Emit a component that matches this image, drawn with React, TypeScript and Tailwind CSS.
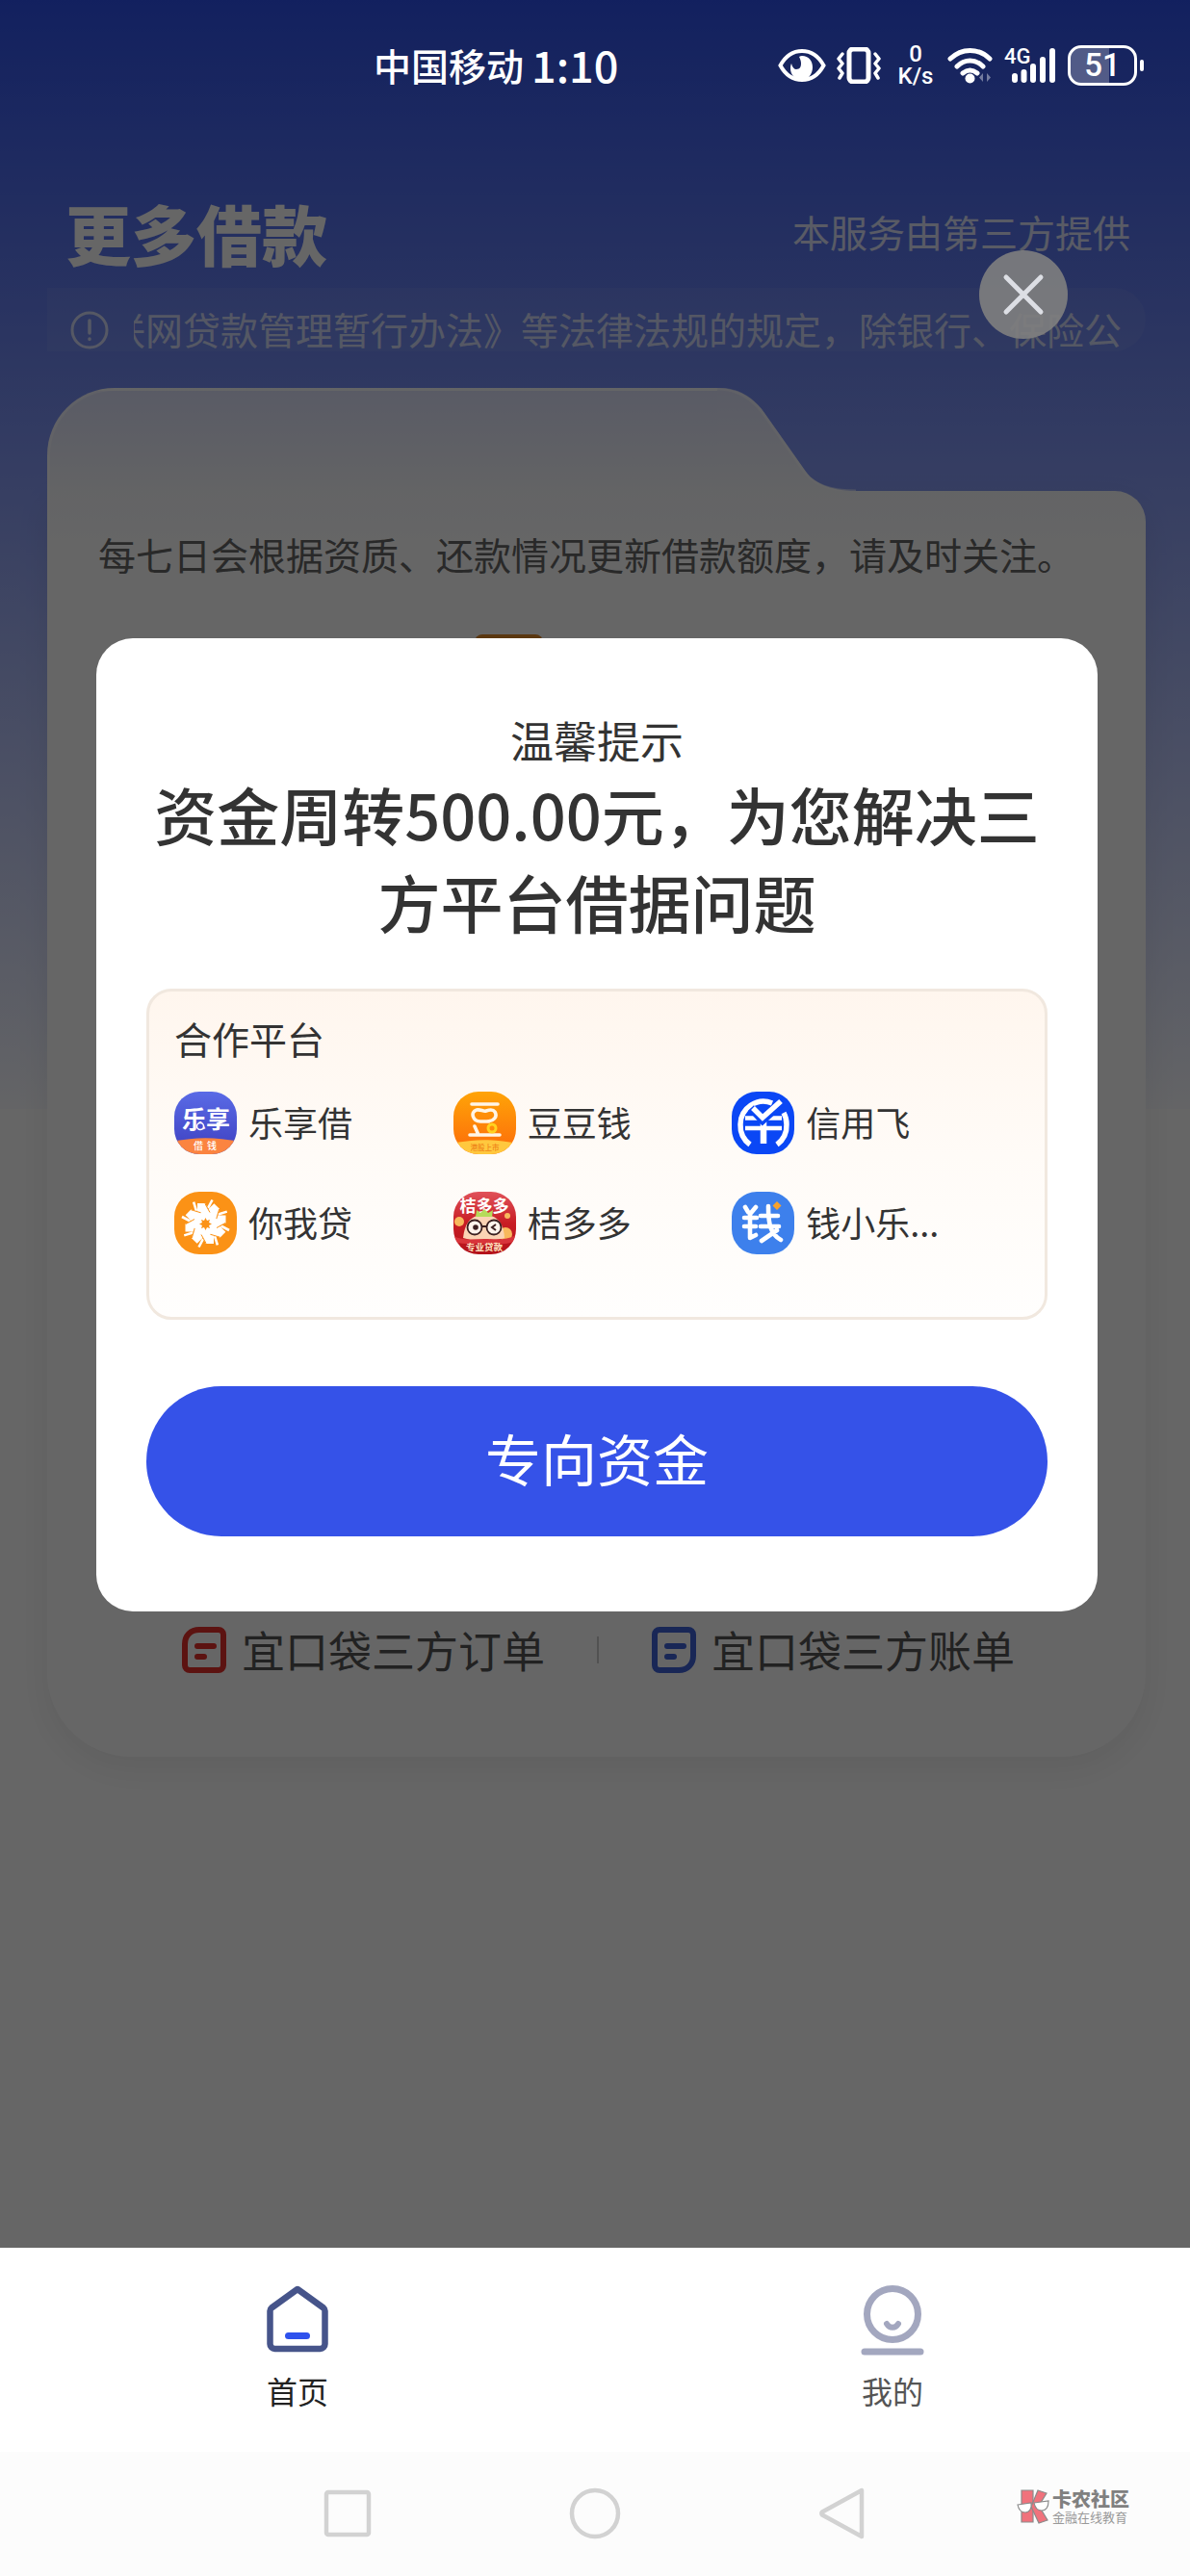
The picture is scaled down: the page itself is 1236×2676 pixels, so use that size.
import React from "react";

const FONT = "font-['Noto_Sans_CJK_SC','Noto_Sans',sans-serif]";

/* ---------- status bar ---------- */

function StatusIcons() {
  return (
    <div className="flex items-center font-['Roboto',sans-serif] text-white">
      <svg className="h-[38px] w-[50px]" viewBox="0 0 50 38" aria-hidden="true">
        <path d="M2.500 19C8 9 16 4 25 4s17 5 22.500 15C42 29 34 34 25 34S8 29 2.500 19Z" fill="none" stroke="currentColor" strokeWidth="4" />
        <path d="M25 9c7 0 11 5 11 12s-5 13-11 13c-7 0-12-5-12-12 0-2 .4-4 1-5 1 4 3 6 5 6 4 0 5-3 5-6 0-3-1-5-2-7 1-.7 2-1 3-1Z" fill="currentColor" />
      </svg>
      <svg className="ml-[11px] h-[38px] w-[46px]" viewBox="0 0 46 38" fill="none" stroke="currentColor" aria-hidden="true">
        <rect x="13" y="2" width="20" height="34" rx="4" strokeWidth="5" />
        <path d="M6 7l-4 5 4 5-4 5 4 5-3 5M40 7l4 5-4 5 4 5-4 5 3 5" strokeWidth="3.500" strokeLinejoin="round" strokeLinecap="round" />
      </svg>
      <div className="ml-4 flex w-[40px] flex-col items-center text-[24px] leading-[23px] font-medium">
        <span>0</span>
        <span>K/s</span>
      </div>
      <svg className="ml-3 h-[38px] w-[50px]" viewBox="0 0 50 38" aria-hidden="true">
        <g fill="none" stroke="currentColor" strokeWidth="5" strokeLinecap="round">
          <path d="M4 12C16 .5 33 .5 45 12" />
          <path d="M11 20c8-8 19-8 27 0" />
          <path d="M17 27c5-4 10-4 15 0" />
        </g>
        <circle cx="24.500" cy="32.500" r="5" fill="currentColor" />
        <path d="M38 27v9l-4-4.500zM42 27v9l4-4.500z" fill="currentColor" opacity=".4" />
      </svg>
      <div className="relative ml-[10px] h-[38px] w-[54px]">
        <span className="absolute top-0 left-0 text-[22px] leading-5 font-medium">4G</span>
        <svg className="h-[38px] w-[54px]" viewBox="0 0 54 38" stroke="currentColor" strokeWidth="6" strokeLinecap="round" aria-hidden="true">
          <path d="M11 30v4M20.500 26v8M30 20v14M40 13v21M50 4v30" />
        </svg>
      </div>
      <div className="ml-3 flex items-center gap-[3px]">
        <div className="relative flex h-[42px] w-[72px] items-center justify-center rounded-[14px] border-[3px] border-white">
          <span className="absolute inset-y-0 left-0 w-[60%] rounded-l-[11px] bg-white/25" />
          <span className="relative text-[33px] leading-9 font-medium">51</span>
        </div>
        <div className="h-3 w-1 rounded-full bg-white" />
      </div>
    </div>
  );
}

/* ---------- partner logos ---------- */

const LOGO = "h-[65px] w-[65px] shrink-0 overflow-hidden rounded-[26px]";

function LogoLexiang() {
  return (
    <svg className={LOGO} viewBox="0 0 65 65" aria-hidden="true">
      <defs>
        <linearGradient id="lx" x1="0" y1="0" x2="0" y2="1">
          <stop offset="0" stopColor="#5a6be6" />
          <stop offset="1" stopColor="#3d3fc0" />
        </linearGradient>
      </defs>
      <rect width="65" height="65" fill="url(#lx)" />
      <path d="M0 52c20-5 45-5 65 0v13H0z" fill="#fb8440" />
      <text x="33" y="38" textAnchor="middle" fontSize="25" fontWeight="700" fill="#fff">乐享</text>
      <circle cx="27" cy="36" r="3.500" fill="#4a51d2" stroke="#fff" strokeWidth="1.500" />
      <text x="20" y="60" fontSize="10" fontWeight="500" fill="#fff">借</text>
      <text x="34" y="60" fontSize="10" fontWeight="500" fill="#fff">钱</text>
    </svg>
  );
}

function LogoDoudou() {
  return (
    <svg className={LOGO} viewBox="0 0 65 65" aria-hidden="true">
      <defs>
        <linearGradient id="dd" x1="0" y1="0" x2="0" y2="1">
          <stop offset="0" stopColor="#ffa408" />
          <stop offset="1" stopColor="#fc6a0a" />
        </linearGradient>
      </defs>
      <rect width="65" height="65" fill="url(#dd)" />
      <path d="M0 54c20-5 45-5 65 0v11H0z" fill="#ffc83e" />
      <g fill="none" stroke="#fff5e6" strokeWidth="3.600" strokeLinecap="round" strokeLinejoin="round">
        <path d="M19 13h27" />
        <path d="M24 19c4-1 7 2 10 1s7-2 9 1c3 5-1 10-9 10h-6c-8 0-11-10-4-12Z" />
        <path d="M17 45h31M22 36l4 9" />
      </g>
      <circle cx="40" cy="38" r="4" fill="#ff8a0a" stroke="#ffd21f" strokeWidth="3" />
      <text x="32.500" y="61" textAnchor="middle" fontSize="7.500" fontWeight="500" fill="#f0861a">港股上市</text>
    </svg>
  );
}

function LogoXinyong() {
  return (
    <svg className={LOGO} viewBox="0 0 65 65" aria-hidden="true">
      <rect width="65" height="65" fill="#0a47f5" />
      <g fill="none" stroke="#fff" strokeWidth="5.500">
        <path d="M19 55A25 25 0 0 1 9 34 24 24 0 0 1 42 12M54 22a25 25 0 0 1 3 12 25 25 0 0 1-10 21" />
        <path d="M14 27.500h38M14 38h38" strokeWidth="4.500" />
        <path d="M33 27v27" strokeWidth="6.500" />
      </g>
      <path d="M20 17l12 13L52 12" fill="none" stroke="#0a47f5" strokeWidth="8" />
      <path d="M22 17l10 10L51 10" fill="none" stroke="#fff" strokeWidth="5.500" />
    </svg>
  );
}

function LogoNiwo() {
  const petals = [0, 45, 90, 135, 180, 225, 270, 315];
  return (
    <svg className={LOGO} viewBox="0 0 65 65" aria-hidden="true">
      <rect width="65" height="65" fill="#fb9216" />
      {petals.map((a) => (
        <g key={a} transform={`rotate(${a} 32.500 33)`}>
          <path d="M24 12h8l5 9v11h-5l-8-11z" fill="#fff" />
          <path d="M35 17l4.500-8.500" stroke="#fff" strokeWidth="2.600" />
        </g>
      ))}
      <g stroke="#fb9216" strokeWidth="1">
        {petals.map((a) => (
          <path key={a} d="M32 12.500l5 9" transform={`rotate(${a} 32.500 33)`} />
        ))}
      </g>
      <path d="M32.500 27l1.500 3 3-1-1 3 3 1.500-3 1.500 1 3-3-1-1.500 3-1.500-3-3 1 1-3-3-1.500 3-1.500-1-3 3 1z" fill="#fb9216" />
    </svg>
  );
}

function LogoJieduo() {
  return (
    <svg className={LOGO} viewBox="0 0 65 65" aria-hidden="true">
      <defs>
        <linearGradient id="jd" x1="0" y1="0" x2="0" y2="1">
          <stop offset="0" stopColor="#e0525a" />
          <stop offset=".5" stopColor="#c81d24" />
          <stop offset="1" stopColor="#b3121a" />
        </linearGradient>
      </defs>
      <rect width="65" height="65" fill="url(#jd)" />
      <circle cx="6" cy="31" r="5" fill="#f8b85c" />
      <circle cx="56" cy="25" r="3" fill="#f8b85c" />
      <circle cx="54" cy="44" r="7" fill="#f8b85c" />
      <path d="M10 48c2-18 10-24 22-24s20 7 21 24c-12 4-31 4-43 0Z" fill="#fbd3b4" />
      <path d="M0 46c10 5 20 3 32 3s22 2 33-4v6c-12 5-22 3-33 3S10 55 0 52z" fill="#d8343a" />
      <text x="32" y="21" textAnchor="middle" fontSize="17" fontWeight="700" fill="#fff">桔多多</text>
      <path d="M23 26l1-7 4 3 4-4 4 4 5-3-1 7z" fill="#b5dc5a" />
      <g fill="#fff4ec" stroke="#3a2020" strokeWidth="1.800">
        <circle cx="22" cy="37" r="7.500" />
        <circle cx="42" cy="37" r="7.500" />
        <path d="M29.500 36h5" />
      </g>
      <circle cx="23" cy="37" r="2.800" fill="#3a2020" />
      <path d="M44 34l-4 3 4 3" fill="none" stroke="#3a2020" strokeWidth="2" />
      <text x="32" y="61" textAnchor="middle" fontSize="9.500" fontWeight="700" fill="#ffe3c0">专业贷款</text>
    </svg>
  );
}

function LogoQian() {
  return (
    <svg className={LOGO} viewBox="0 0 65 65" aria-hidden="true">
      <rect width="65" height="65" fill="#3d80ec" />
      <g fill="none" stroke="#fff" strokeWidth="4.600" strokeLinecap="round" strokeLinejoin="round">
        <path d="M14 16l3 5M25 16l-5 6M13 27h13M13 36h12M19 22v26l6-3" />
        <path d="M30 25h18M30 36h19M38 15c0 18 2 29 13 35M47 40L31 51" />
      </g>
      <path d="M47 10l4.500 4.500L47 19l-4.500-4.500z" fill="#f7a12c" />
    </svg>
  );
}

const PARTNERS = [
  { name: "乐享借", Logo: LogoLexiang },
  { name: "豆豆钱", Logo: LogoDoudou },
  { name: "信用飞", Logo: LogoXinyong },
  { name: "你我贷", Logo: LogoNiwo },
  { name: "桔多多", Logo: LogoJieduo },
  { name: "钱小乐...", Logo: LogoQian },
];

/* ---------- page pieces ---------- */

function ListIcon({ flip }: { flip?: boolean }) {
  return (
    <svg className="h-[50px] w-[48px]" viewBox="0 0 48 50" fill="none" stroke="currentColor" strokeWidth="6" strokeLinecap="round" aria-hidden="true">
      <path
        d={
          flip
            ? "M9 4h30a5 5 0 0 1 5 5v22c0 9-6 15-15 15H9a5 5 0 0 1-5-5V9a5 5 0 0 1 5-5Z"
            : "M19 4h20a5 5 0 0 1 5 5v32a5 5 0 0 1-5 5H9a5 5 0 0 1-5-5V19C4 10 10 4 19 4Z"
        }
      />
      <path d="M17 21h17M17 32h7" />
    </svg>
  );
}

function LoanCard() {
  return (
    <section className="mr-[46px] ml-[49px]">
      <div className="flex h-[107px]">
        <div className="w-[61%] rounded-tl-[70px] border-t-3 border-l-3 border-white/50 bg-linear-to-b/srgb from-[#dfe3fd] to-[#f8f9fd]" />
        <svg className="h-[107px] w-[144px]" viewBox="0 0 144 107" aria-hidden="true">
          <defs>
            <linearGradient id="tab" x1="0" y1="0" x2="0" y2="1">
              <stop offset="0" stopColor="#dfe3fd" />
              <stop offset="1" stopColor="#f8f9fd" />
            </linearGradient>
          </defs>
          <path d="M0 0c20 0 37 9 49 26l43 61c10 14 30 20 52 20H0Z" fill="url(#tab)" />
          <path d="M0 1c20 0 36 9 48 26l43 61c10 14 31 19 53 19" fill="none" stroke="#fff" strokeOpacity=".5" strokeWidth="3" />
        </svg>
      </div>
      <div className="rounded-tr-[32px] rounded-b-[88px] border-l-3 border-white/50 bg-linear-to-b/srgb from-[#f8f9fd] to-white to-[60px] shadow-[0_12px_36px_rgba(0,0,0,0.07)]">
        <div className="flex h-[1315px] flex-col">
          <p className="pt-[37px] pl-[50px] text-[39px] leading-[56px] text-[#666]">
            每七日会根据资质、还款情况更新借款额度，请及时关注。
          </p>
          <div className="mt-[56px] ml-[441px] h-10 w-[71px] rounded-t-lg bg-[#e08a2a]" />
          <div className="mt-auto mb-[81px] flex items-center justify-center text-[45px] leading-[60px] text-[#555]">
            <a href="#orders" className="flex items-center gap-[15px]">
              <span className="text-[#e5302c]"><ListIcon /></span>
              宜口袋三方订单
            </a>
            <span className="mx-[54px] h-7 w-[2px] bg-[#ccc]" />
            <a href="#bills" className="flex items-center gap-[15px]">
              <span className="text-[#3f62d8]"><ListIcon flip /></span>
              宜口袋三方账单
            </a>
          </div>
        </div>
      </div>
    </section>
  );
}

function Dialog() {
  return (
    <div className="absolute inset-0 flex items-center bg-black/60 pt-[2px] pr-24 pl-[100px]">
      <button
        type="button"
        aria-label="关闭"
        className="absolute top-[260px] right-[127px] flex h-[92px] w-[92px] items-center justify-center rounded-full bg-[#808080]/90 text-[#dcdee4]"
      >
        <svg className="h-[46px] w-[46px]" viewBox="0 0 46 46" stroke="currentColor" strokeWidth="5" strokeLinecap="round" aria-hidden="true">
          <path d="M5 5l36 36M41 5L5 41" />
        </svg>
      </button>
      <div role="dialog" aria-labelledby="dialog-title" className="w-full rounded-[38px] bg-white px-[52px] pt-[75px] pb-[78px] text-center text-[#333]">
        <p className="text-[45px] leading-[62px]">温馨提示</p>
        <h2 id="dialog-title" className="text-[65px] leading-[91px] font-medium">
          资金周转500.00元，为您解决三方平台借据问题
        </h2>
        <div className="mt-[45px] rounded-[26px] border-3 border-[#f1e8df] bg-linear-to-b/srgb from-[#fff6ee] via-[#fffbf7] to-[#fffefd] pt-[24px] pr-[35px] pb-[65px] pl-[26px] text-left">
          <h3 className="text-[39px] leading-[48px]">合作平台</h3>
          <ul className="mt-8 grid grid-cols-3 gap-y-[39px]">
            {PARTNERS.map(({ name, Logo }) => (
              <li key={name} className="flex items-center gap-3 text-[36px]">
                <Logo />
                <span className="pb-1 leading-[52px] whitespace-nowrap">{name}</span>
              </li>
            ))}
          </ul>
        </div>
        <button type="button" className="mt-[69px] flex h-[156px] w-full items-center justify-center rounded-full bg-[#3552e8] pb-2 text-[58px] leading-[80px] text-white">
          专向资金
        </button>
      </div>
    </div>
  );
}

function Watermark() {
  return (
    <div className="absolute top-[38px] right-[63px] flex items-center gap-[3px]">
      <svg className="h-[36px] w-[34px]" viewBox="0 0 34 36" stroke="#8b8b8b" strokeWidth="1.200" aria-hidden="true">
        <path d="M5 1h12v33H5z" fill="#f0727c" />
        <path d="M22 1l9 3-8 13 9 15-9 3-8-17z" fill="#f0727c" />
        <path d="M1 16l14-2c1 6-2 10-6 10s-7-3-8-8ZM18 14l15-2c0 7-3 10-7 10s-7-3-8-8Z" fill="#fff" />
      </svg>
      <div>
        <p className="text-[20px] leading-[22px] font-black text-[#808080]">卡农社区</p>
        <p className="text-[13px] leading-[16px] text-[#999]">金融在线教育</p>
      </div>
    </div>
  );
}

export default function App() {
  return (
    <div className={`${FONT} flex min-h-screen flex-col bg-[#fcfcfc]`}>
      <main className="relative min-h-[2335px] bg-white">
        <div className="absolute inset-x-0 top-0 h-[1152px] bg-linear-to-b/srgb from-[#2f52ed] to-[#fafbff]" />
        <div className="relative pt-[202px]">
          <header className="flex items-center justify-between pr-[62px] pl-[68px] text-white">
            <h1 className="text-[68px] leading-[80px] font-black">更多借款</h1>
            <p className="pb-1 text-[39px] leading-[72px] text-white/80">本服务由第三方提供</p>
          </header>
          <div className="mt-[17px] mr-[46px] ml-[49px] flex h-[66px] items-center rounded-r-full bg-white/6 pt-[18px] pr-[25px] pl-6 text-white/70">
            <svg className="mt-1 h-10 w-10 shrink-0" viewBox="0 0 40 40" fill="none" stroke="currentColor" strokeWidth="3" strokeLinecap="round" aria-hidden="true">
              <circle cx="20" cy="20" r="18" />
              <path d="M20 10v13M20 29v.5" strokeWidth="3.500" />
            </svg>
            <div className="ml-[26px] flex min-w-0 flex-1 justify-end overflow-hidden">
              <p className="text-[39px] leading-[56px] whitespace-nowrap">
                联网贷款管理暂行办法》等法律法规的规定，除银行、保险公
              </p>
            </div>
          </div>
          <div className="mt-[38px]">
            <LoanCard />
          </div>
        </div>
        <Dialog />
        <div className="absolute inset-x-0 top-0 flex h-[136px] items-center justify-between pr-12 pl-[388px] text-white">
          <p className="flex items-center gap-2 pb-[3px]">
            <span className="text-[39px] leading-[56px] font-medium">中国移动</span>
            <span className="text-[45px] leading-[56px] font-medium">1:10</span>
          </p>
          <StatusIcons />
        </div>
      </main>

      <nav className="grid h-[212px] grid-cols-2 bg-white text-[32px] leading-[44px]">
        <a href="#home" className="flex flex-col items-center pt-[36px] text-[#222]">
          <svg className="h-[76px] w-[68px]" viewBox="0 0 68 76" fill="none" strokeLinejoin="round" strokeLinecap="round" aria-hidden="true">
            <path d="M34 7l27 19.500a4 4 0 0 1 1.500 3V64a5 5 0 0 1-5 5h-47a5 5 0 0 1-5-5V29.500a4 4 0 0 1 1.500-3Z" stroke="#46548a" strokeWidth="6.500" />
            <path d="M24.500 55.500h19" stroke="#2f52ed" strokeWidth="7" />
          </svg>
          <span className="mt-[14px]">首页</span>
        </a>
        <a href="#mine" className="flex flex-col items-center pt-[36px] text-[#555]">
          <svg className="h-[76px] w-[68px]" viewBox="0 0 68 76" fill="none" stroke="#a3a7bf" strokeWidth="7" strokeLinecap="round" aria-hidden="true">
            <circle cx="34" cy="33" r="26.500" />
            <path d="M28 43c3 5 9 5 12 0" strokeWidth="6" />
            <path d="M5 72h58" />
          </svg>
          <span className="mt-[14px]">我的</span>
        </a>
      </nav>

      <footer className="relative flex h-[129px] items-start justify-center gap-[201px] pt-[36px] text-[#d2d2d2]">
        <button type="button" aria-label="最近任务">
          <svg className="h-14 w-14" viewBox="0 0 56 56" fill="none" stroke="currentColor" strokeWidth="4.500" aria-hidden="true">
            <rect x="6" y="6" width="44" height="44" rx="2" />
          </svg>
        </button>
        <button type="button" aria-label="主屏幕">
          <svg className="h-14 w-14" viewBox="0 0 56 56" fill="none" stroke="currentColor" strokeWidth="4.500" aria-hidden="true">
            <circle cx="28" cy="28" r="24" />
          </svg>
        </button>
        <button type="button" aria-label="返回">
          <svg className="h-14 w-14" viewBox="0 0 56 56" fill="none" stroke="currentColor" strokeWidth="4.500" strokeLinejoin="round" aria-hidden="true">
            <path d="M48 4v48L7 29.500a2 2 0 0 1 0-3Z" />
          </svg>
        </button>
        <Watermark />
      </footer>
    </div>
  );
}
